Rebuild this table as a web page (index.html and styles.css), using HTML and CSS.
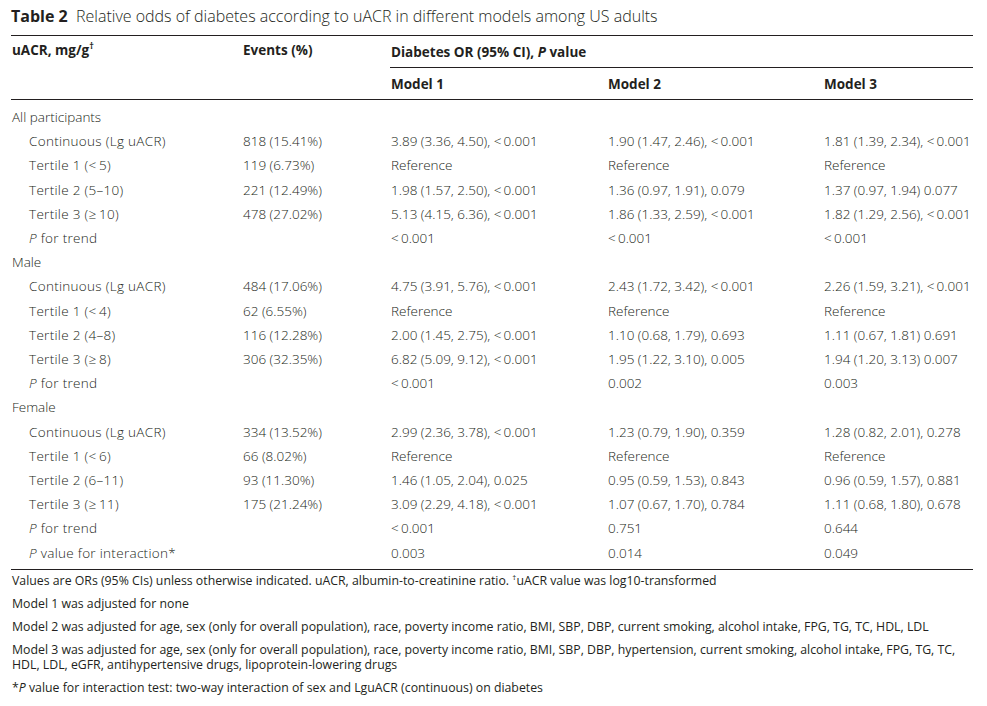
FILE: index.html
```html
<!DOCTYPE html>
<html lang="en">
<head>
<meta charset="utf-8">
<title>Table 2</title>
<link rel="stylesheet" href="styles.css">
</head>
<body>
<div class="page">
  <h1 class="caption"><b>Table 2</b>&nbsp; Relative odds of diabetes according to uACR in different models among US adults</h1>
  <table class="data">
    <colgroup>
      <col class="c1"><col class="c2"><col class="c3"><col class="c4"><col class="c5">
    </colgroup>
    <thead>
      <tr class="h1">
        <th rowspan="2" class="top">uACR, mg/g<sup>†</sup></th>
        <th rowspan="2" class="top">Events (%)</th>
        <th colspan="3" class="group">Diabetes OR (95% CI), <i>P</i> value</th>
      </tr>
      <tr class="h2">
        <th>Model 1</th>
        <th>Model 2</th>
        <th>Model 3</th>
      </tr>
    </thead>
    <tbody>
      <tr class="first"><td>All participants</td><td></td><td></td><td></td><td></td></tr>
      <tr><td class="ind">Continuous (Lg uACR)</td><td>818 (15.41%)</td><td>3.89 (3.36, 4.50), &lt;&thinsp;0.001</td><td>1.90 (1.47, 2.46), &lt;&thinsp;0.001</td><td>1.81 (1.39, 2.34), &lt;&thinsp;0.001</td></tr>
      <tr><td class="ind">Tertile 1 (&lt;&thinsp;5)</td><td>119 (6.73%)</td><td>Reference</td><td>Reference</td><td>Reference</td></tr>
      <tr><td class="ind">Tertile 2 (5–10)</td><td>221 (12.49%)</td><td>1.98 (1.57, 2.50), &lt;&thinsp;0.001</td><td>1.36 (0.97, 1.91), 0.079</td><td>1.37 (0.97, 1.94) 0.077</td></tr>
      <tr><td class="ind">Tertile 3 (≥&thinsp;10)</td><td>478 (27.02%)</td><td>5.13 (4.15, 6.36), &lt;&thinsp;0.001</td><td>1.86 (1.33, 2.59), &lt;&thinsp;0.001</td><td>1.82 (1.29, 2.56), &lt;&thinsp;0.001</td></tr>
      <tr><td class="ind"><i>P</i> for trend</td><td></td><td>&lt;&thinsp;0.001</td><td>&lt;&thinsp;0.001</td><td>&lt;&thinsp;0.001</td></tr>
      <tr><td>Male</td><td></td><td></td><td></td><td></td></tr>
      <tr><td class="ind">Continuous (Lg uACR)</td><td>484 (17.06%)</td><td>4.75 (3.91, 5.76), &lt;&thinsp;0.001</td><td>2.43 (1.72, 3.42), &lt;&thinsp;0.001</td><td>2.26 (1.59, 3.21), &lt;&thinsp;0.001</td></tr>
      <tr><td class="ind">Tertile 1 (&lt;&thinsp;4)</td><td>62 (6.55%)</td><td>Reference</td><td>Reference</td><td>Reference</td></tr>
      <tr><td class="ind">Tertile 2 (4–8)</td><td>116 (12.28%)</td><td>2.00 (1.45, 2.75), &lt;&thinsp;0.001</td><td>1.10 (0.68, 1.79), 0.693</td><td>1.11 (0.67, 1.81) 0.691</td></tr>
      <tr><td class="ind">Tertile 3 (≥&thinsp;8)</td><td>306 (32.35%)</td><td>6.82 (5.09, 9.12), &lt;&thinsp;0.001</td><td>1.95 (1.22, 3.10), 0.005</td><td>1.94 (1.20, 3.13) 0.007</td></tr>
      <tr><td class="ind"><i>P</i> for trend</td><td></td><td>&lt;&thinsp;0.001</td><td>0.002</td><td>0.003</td></tr>
      <tr><td>Female</td><td></td><td></td><td></td><td></td></tr>
      <tr><td class="ind">Continuous (Lg uACR)</td><td>334 (13.52%)</td><td>2.99 (2.36, 3.78), &lt;&thinsp;0.001</td><td>1.23 (0.79, 1.90), 0.359</td><td>1.28 (0.82, 2.01), 0.278</td></tr>
      <tr><td class="ind">Tertile 1 (&lt;&thinsp;6)</td><td>66 (8.02%)</td><td>Reference</td><td>Reference</td><td>Reference</td></tr>
      <tr><td class="ind">Tertile 2 (6–11)</td><td>93 (11.30%)</td><td>1.46 (1.05, 2.04), 0.025</td><td>0.95 (0.59, 1.53), 0.843</td><td>0.96 (0.59, 1.57), 0.881</td></tr>
      <tr><td class="ind">Tertile 3 (≥&thinsp;11)</td><td>175 (21.24%)</td><td>3.09 (2.29, 4.18), &lt;&thinsp;0.001</td><td>1.07 (0.67, 1.70), 0.784</td><td>1.11 (0.68, 1.80), 0.678</td></tr>
      <tr><td class="ind"><i>P</i> for trend</td><td></td><td>&lt;&thinsp;0.001</td><td>0.751</td><td>0.644</td></tr>
      <tr class="last"><td class="ind"><i>P</i> value for interaction*</td><td></td><td>0.003</td><td>0.014</td><td>0.049</td></tr>
    </tbody>
  </table>
  <div class="notes">
    <p>Values are ORs (95% CIs) unless otherwise indicated. uACR, albumin-to-creatinine ratio. <sup>†</sup>uACR value was log10-transformed</p>
    <p>Model 1 was adjusted for none</p>
    <p>Model 2 was adjusted for age, sex (only for overall population), race, poverty income ratio, BMI, SBP, DBP, current smoking, alcohol intake, FPG, TG, TC, HDL, LDL</p>
    <p>Model 3 was adjusted for age, sex (only for overall population), race, poverty income ratio, BMI, SBP, DBP, hypertension, current smoking, alcohol intake, FPG, TG, TC, HDL, LDL, eGFR, antihypertensive drugs, lipoprotein-lowering drugs</p>
    <p>*<i>P</i> value for interaction test: two-way interaction of sex and LguACR (continuous) on diabetes</p>
  </div>
</div>
</body>
</html>
```

FILE: styles.css
```css
html, body {
  margin: 0;
  padding: 0;
  background: #ffffff;
}

body {
  font-family: "Open Sans", "Noto Sans", "Liberation Sans", sans-serif;
  color: #231f20;
}

.page {
  padding: 5px 14px 0 11px;
  width: 962px;
}

.caption {
  margin: 0;
  font-size: 16px;
  font-weight: 300;
  line-height: 22px;
  color: #231f20;
  height: 30px;
  white-space: nowrap;
}

.caption b {
  font-weight: 700;
}

.data {
  width: 962px;
  border-collapse: collapse;
  table-layout: fixed;
  font-size: 13.5px;
}

.c1 { width: 231px; }
.c2 { width: 148px; }
.c3 { width: 217px; }
.c4 { width: 216px; }
.c5 { width: 150px; }

.data th {
  text-align: left;
  font-weight: 700;
  padding: 0 0 0 1px;
  height: 31px;
  vertical-align: middle;
  white-space: nowrap;
}

.data thead {
  border-top: 1px solid #231f20;
  border-bottom: 1px solid #231f20;
}

.data th.top {
  vertical-align: top;
  padding-top: 5px;
}

.data th.group {
  border-bottom: 1px solid #231f20;
}

.data th sup {
  font-size: 9px;
  line-height: 0;
  position: relative;
  top: -1px;
}

.data td {
  padding: 0 0 0 1px;
  font-weight: 300;
  line-height: 24.2px;
  height: 24.2px;
  white-space: nowrap;
}

.data td.ind {
  padding-left: 18px;
  letter-spacing: 0.3px;
}

.data tbody {
  border-bottom: 1px solid #231f20;
}

.data tr.first td {
  padding-top: 5px;
}

.data tr.last td {
  padding-bottom: 4px;
}

.notes {
  padding-top: 3px;
  font-size: 12.3px;
  line-height: 15px;
}

.notes p {
  margin: 0 0 8px 0;
  padding-left: 1px;
}

.notes sup {
  font-size: 8px;
  line-height: 0;
}
```
